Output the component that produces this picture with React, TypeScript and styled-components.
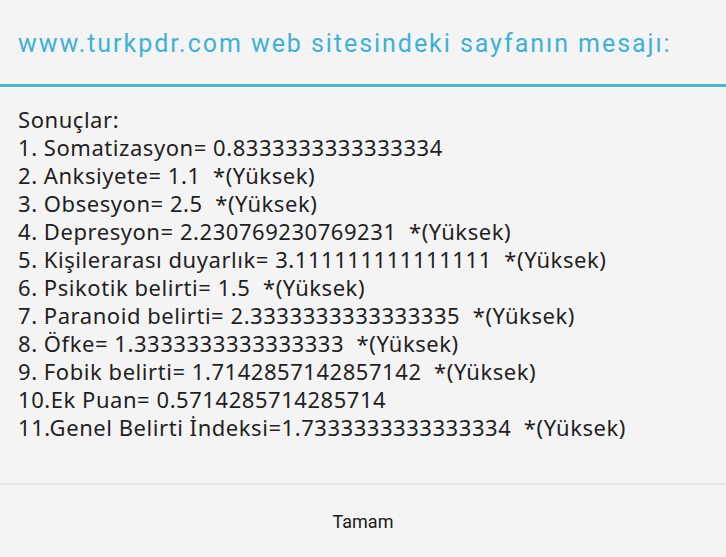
import React from "react";
import styled, { createGlobalStyle } from "styled-components";

const Global = createGlobalStyle`
  html, body {
    margin: 0;
    padding: 0;
    background: #f4f4f4;
  }
  body {
    font-family: Roboto, "Noto Sans", sans-serif;
  }
`;

const Dialog = styled.div`
  width: 726px;
  height: 557px;
  display: flex;
  flex-direction: column;
  background: #f4f4f4;
`;

const Header = styled.div`
  height: 87px;
  display: flex;
  align-items: center;
  padding: 3px 18px 0;
  border-bottom: 3px solid #4db4d8;
  box-sizing: border-box;
`;

const Title = styled.h1`
  margin: 0;
  font-family: Roboto, sans-serif;
  font-size: 25px;
  font-weight: 400;
  color: #3eb1d8;
  letter-spacing: 1.95px;
`;

const Body = styled.div`
  flex: 1;
  padding: 18px 18px 0;
  color: #1f1f1f;
  font-family: "Noto Sans", "Open Sans", sans-serif;
  font-size: 22px;
  line-height: 28px;
  letter-spacing: 0.55px;
`;

const Line = styled.div`
  white-space: pre;
`;

const Footer = styled.div`
  height: 72px;
  border-top: 2px solid #e0e0e0;
  display: flex;
`;

const Button = styled.button`
  flex: 1;
  border: none;
  background: transparent;
  font-family: Roboto, sans-serif;
  font-size: 18px;
  color: #1a1a1a;
  padding: 0;
`;

const lines = [
  "Sonuçlar:",
  "1. Somatizasyon= 0.8333333333333334",
  "2. Anksiyete= 1.1  *(Yüksek)",
  "3. Obsesyon= 2.5  *(Yüksek)",
  "4. Depresyon= 2.230769230769231  *(Yüksek)",
  "5. Kişilerarası duyarlık= 3.111111111111111  *(Yüksek)",
  "6. Psikotik belirti= 1.5  *(Yüksek)",
  "7. Paranoid belirti= 2.3333333333333335  *(Yüksek)",
  "8. Öfke= 1.3333333333333333  *(Yüksek)",
  "9. Fobik belirti= 1.7142857142857142  *(Yüksek)",
  "10.Ek Puan= 0.5714285714285714",
  "11.Genel Belirti İndeksi=1.7333333333333334  *(Yüksek)",
];

export default function App() {
  return (
    <>
      <Global />
      <Dialog>
        <Header>
          <Title>www.turkpdr.com web sitesindeki sayfanın mesajı:</Title>
        </Header>
        <Body>
          {lines.map((l, i) => (
            <Line key={i}>{l}</Line>
          ))}
        </Body>
        <Footer>
          <Button>Tamam</Button>
        </Footer>
      </Dialog>
    </>
  );
}
